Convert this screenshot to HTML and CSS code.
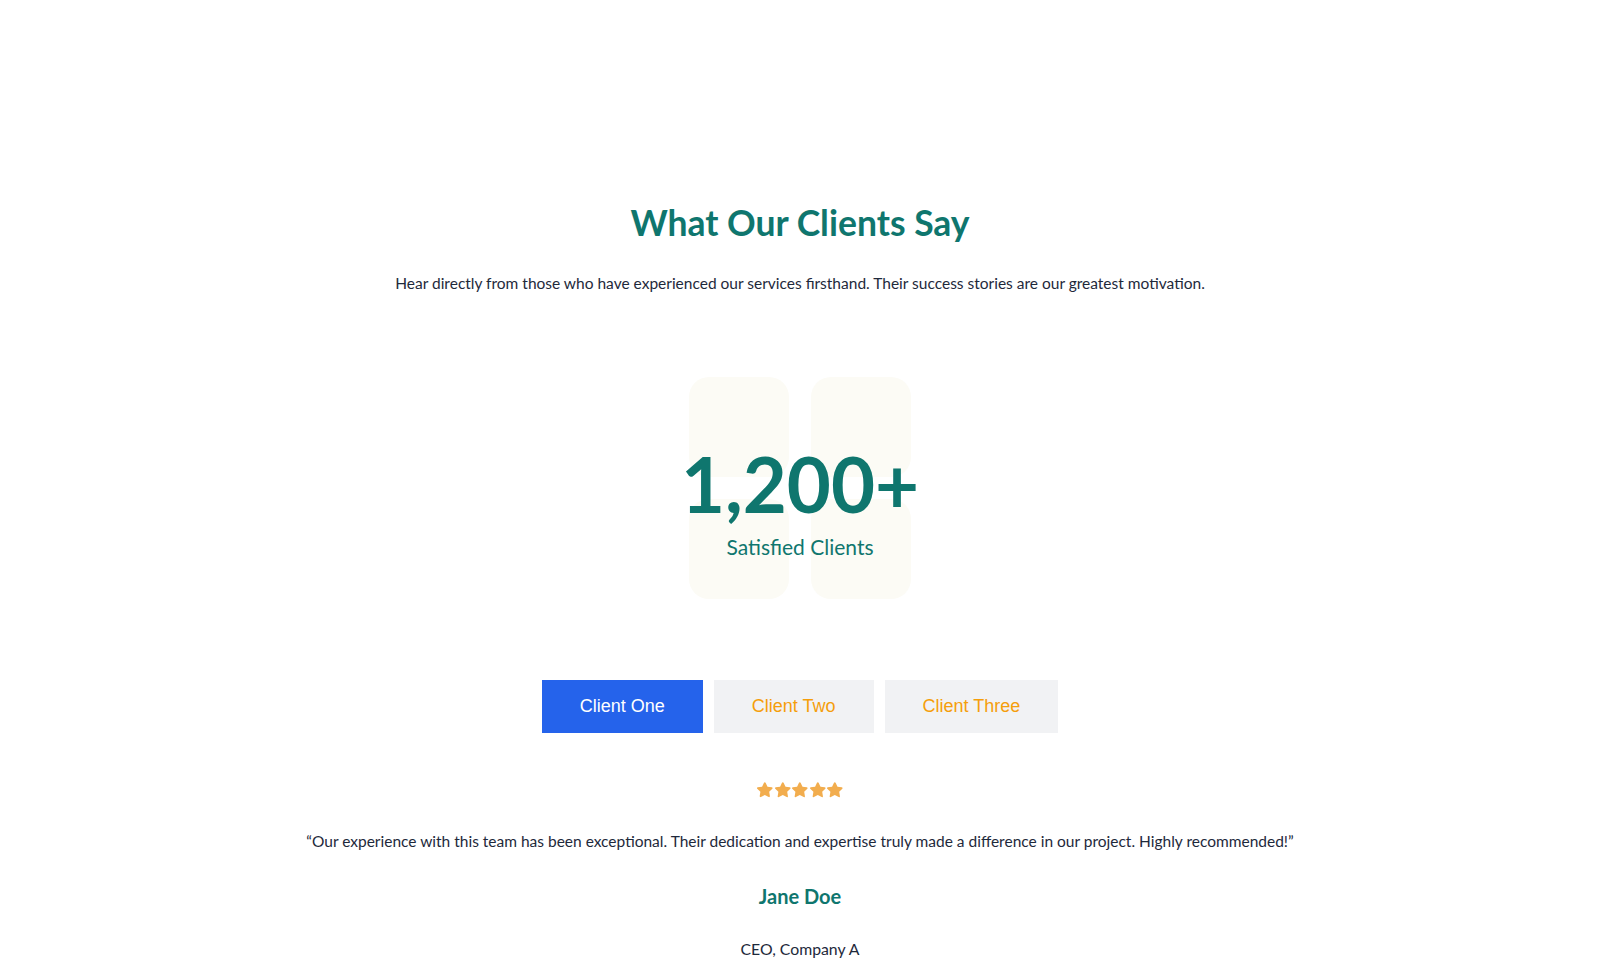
FILE: index.html
```html
<!DOCTYPE html>
<html lang="en">
<head>
  <meta charset="UTF-8">
  <meta name="viewport" content="width=device-width, initial-scale=1.0">
  <title>Testimonials</title>
  <link rel="stylesheet" href="styles.css">
</head>
<body>
  <section class="testimonials">
    <h1 class="title">What Our Clients Say</h1>
    <p class="subtitle">Hear directly from those who have experienced our services firsthand. Their success stories are our greatest motivation.</p>

    <div class="stats">
      <div class="tiles">
        <div class="tile"></div>
        <div class="tile"></div>
        <div class="tile"></div>
        <div class="tile"></div>
      </div>
      <div class="stats-text">
        <span class="stats-number">1,200+</span>
        <span class="stats-label">Satisfied Clients</span>
      </div>
    </div>

    <div class="tabs">
      <button class="tab active">Client One</button>
      <button class="tab">Client Two</button>
      <button class="tab">Client Three</button>
    </div>

    <div class="stars">
      <svg viewBox="0 0 24 24"><path d="M12 1.6c.5 0 .9.3 1.1.7l2.6 5.4 5.9.8c1 .2 1.4 1.4.7 2.1l-4.3 4.2 1 5.9c.2 1-.9 1.7-1.7 1.2L12 19.1l-5.3 2.8c-.9.5-1.9-.2-1.7-1.2l1-5.9-4.3-4.2c-.7-.7-.3-1.9.7-2.1l5.9-.8 2.6-5.4c.2-.4.6-.7 1.1-.7z"/></svg>
      <svg viewBox="0 0 24 24"><path d="M12 1.6c.5 0 .9.3 1.1.7l2.6 5.4 5.9.8c1 .2 1.4 1.4.7 2.1l-4.3 4.2 1 5.9c.2 1-.9 1.7-1.7 1.2L12 19.1l-5.3 2.8c-.9.5-1.9-.2-1.7-1.2l1-5.9-4.3-4.2c-.7-.7-.3-1.9.7-2.1l5.9-.8 2.6-5.4c.2-.4.6-.7 1.1-.7z"/></svg>
      <svg viewBox="0 0 24 24"><path d="M12 1.6c.5 0 .9.3 1.1.7l2.6 5.4 5.9.8c1 .2 1.4 1.4.7 2.1l-4.3 4.2 1 5.9c.2 1-.9 1.7-1.7 1.2L12 19.1l-5.3 2.8c-.9.5-1.9-.2-1.7-1.2l1-5.9-4.3-4.2c-.7-.7-.3-1.9.7-2.1l5.9-.8 2.6-5.4c.2-.4.6-.7 1.1-.7z"/></svg>
      <svg viewBox="0 0 24 24"><path d="M12 1.6c.5 0 .9.3 1.1.7l2.6 5.4 5.9.8c1 .2 1.4 1.4.7 2.1l-4.3 4.2 1 5.9c.2 1-.9 1.7-1.7 1.2L12 19.1l-5.3 2.8c-.9.5-1.9-.2-1.7-1.2l1-5.9-4.3-4.2c-.7-.7-.3-1.9.7-2.1l5.9-.8 2.6-5.4c.2-.4.6-.7 1.1-.7z"/></svg>
      <svg viewBox="0 0 24 24"><path d="M12 1.6c.5 0 .9.3 1.1.7l2.6 5.4 5.9.8c1 .2 1.4 1.4.7 2.1l-4.3 4.2 1 5.9c.2 1-.9 1.7-1.7 1.2L12 19.1l-5.3 2.8c-.9.5-1.9-.2-1.7-1.2l1-5.9-4.3-4.2c-.7-.7-.3-1.9.7-2.1l5.9-.8 2.6-5.4c.2-.4.6-.7 1.1-.7z"/></svg>
    </div>

    <p class="quote">&ldquo;Our experience with this team has been exceptional. Their dedication and expertise truly made a difference in our project. Highly recommended!&rdquo;</p>
    <h3 class="name">Jane Doe</h3>
    <p class="role">CEO, Company A</p>
  </section>
</body>
</html>
```

FILE: styles.css
```css
body {
  margin: 0;
  background: #fff;
  font-family: "Lato", "Open Sans", sans-serif;
  color: #1e293b;
}
.testimonials {
  display: flex;
  flex-direction: column;
  align-items: center;
  text-align: center;
  padding-top: 203px;
}
.title {
  margin: 0;
  font-size: 35.5px;
  line-height: 40px;
  font-weight: 700;
  color: #0f766e;
}
.subtitle {
  margin: 28px 0 0;
  font-size: 15.5px;
  line-height: 24px;
}
.stats {
  margin-top: 82px;
  display: grid;
}
.tiles,
.stats-text {
  grid-area: 1 / 1;
}
.tiles {
  justify-self: center;
  display: grid;
  grid-template-columns: 100px 100px;
  grid-template-rows: 100px 100px;
  gap: 22px;
}
.tile {
  background: #fcfbf5;
  border-radius: 20px;
}
.stats-text {
  display: flex;
  flex-direction: column;
  align-items: center;
  padding-top: 62px;
  color: #0f766e;
  z-index: 1;
}
.stats-number {
  font-size: 76px;
  line-height: 90px;
  font-weight: 700;
  white-space: nowrap;
}
.stats-label {
  font-size: 21px;
  line-height: 28px;
  margin-top: 4px;
}
.tabs {
  margin-top: 81px;
  display: flex;
  gap: 11px;
}
.tab {
  font-family: "Liberation Sans", Arial, sans-serif;
  font-size: 18px;
  height: 53px;
  padding: 0 38px;
  border: none;
  background: #f1f2f4;
  color: #f59e0b;
  cursor: pointer;
}
.tab.active {
  background: #2563eb;
  color: #fff;
}
.stars {
  margin-top: 48px;
  display: flex;
}
.stars svg {
  width: 17.6px;
  height: 17.6px;
  fill: #f2ad4e;
}
.quote {
  margin: 30px 0 0;
  font-size: 15.5px;
  line-height: 24px;
}
.name {
  margin: 29px 0 0;
  font-size: 20px;
  line-height: 28px;
  font-weight: 700;
  color: #0f766e;
}
.role {
  margin: 28px 0 0;
  font-size: 15.8px;
  line-height: 22px;
}
```
